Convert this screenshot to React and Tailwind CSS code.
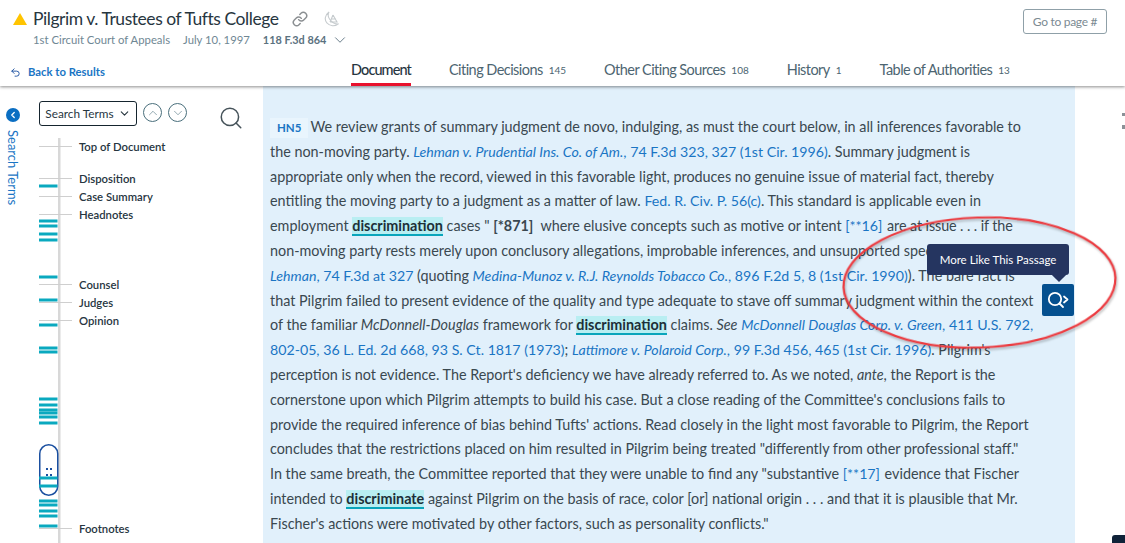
import React from 'react';
import { ChevronDown, ChevronUp, ChevronLeft, Search, Link as ChainIcon, Undo2 } from 'lucide-react';

const tabs = [
  { label: 'Document', active: true },
  { label: 'Citing Decisions', count: '145' },
  { label: 'Other Citing Sources', count: '108' },
  { label: 'History', count: '1' },
  { label: 'Table of Authorities', count: '13' },
];

const hits = [186, 221, 226, 234, 240, 277, 300, 325, 348, 352, 399, 405, 410, 413, 417, 423, 478, 486, 501, 505, 511, 516, 526];
const ticks = [146, 178, 196, 214, 284, 302, 320, 528];

const Link = ({ children, italic }) => (
  <span className={`text-[14.18px] text-[#1a75c4] ${italic ? 'italic' : ''}`}>{children}</span>
);

const Term = ({ children }) => (
  <span className="bg-[#b9eef2] border-b-2 border-[#0aa5bb] font-bold text-[#1d2f38]">{children}</span>
);

const Line = ({ children }) => <div className="h-[24.8px] whitespace-nowrap">{children}</div>;

function Header() {
  return (
    <header className="h-[86px] bg-white shadow-[0_1px_3px_rgba(0,0,0,0.45)] relative z-10 flex flex-col shrink-0">
      <div className="flex justify-between pt-[8px] pr-[18px]">
        <div className="pl-[13px]">
          <div className="flex items-center h-[22px]">
            <svg width="14" height="12" viewBox="0 0 14 12"><path d="M7 0 L14 12 L0 12 Z" fill="#ffc400" /></svg>
            <h1 className="ml-[6px] text-[17.5px] font-normal text-[#27363f] tracking-[-0.45px]">Pilgrim v. Trustees of Tufts College</h1>
            <ChainIcon className="ml-[14px] text-[#8b8f92]" size={16} strokeWidth={2.2} />
            <svg className="ml-[16px]" width="15" height="16" viewBox="0 0 15 16" fill="none" stroke="#c6cbce" strokeWidth="1.1">
              <path d="M5 1 C1 4 0 9 3 12 C6 15.5 11 15.5 14 13 C10 13 7.5 11 5.5 8 C4 6 4 3 5 1 Z" />
              <path d="M9 4 L6 11 M9 4 L13 11 L6 11 M7.5 8 L12 8" />
            </svg>
          </div>
          <div className="flex items-center pl-[20px] mt-[1px] text-[11.3px] leading-[18px] text-[#6f8794]">
            <span>1st Circuit Court of Appeals</span>
            <span className="ml-[13px]">July 10, 1997</span>
            <span className="ml-[13px] text-[10.9px] font-bold text-[#5b7280]">118 F.3d 864</span>
            <ChevronDown className="ml-[5px] text-[#5b7280]" size={18} strokeWidth={1.2} />
          </div>
        </div>
        <button className="mt-[1px] w-[84px] h-[25px] border border-[#8fa0a8] rounded-[3px] text-[12px] text-[#7b8a92] tracking-[-0.3px]">Go to page #</button>
      </div>
      <div className="flex items-center mt-[8px] h-[29px]">
        <a className="w-[351px] flex items-center pl-[10px] pt-[2px] text-[11.3px] font-bold text-[#1a75c4]">
          <Undo2 size={11} strokeWidth={2} className="text-[#1a4fa0]" />
          <span className="ml-[7px]">Back to Results</span>
        </a>
        <nav className="flex gap-[38px] h-full">
          {tabs.map((t) => (
            <div key={t.label} className={`flex items-center h-[29px] border-b-[3px] text-[14.5px] ${t.active ? 'tracking-[-0.9px] border-[#e8112d] font-medium text-[#27363f]' : 'tracking-[-0.55px] border-transparent text-[#4d6571]'}`}>
              {t.label}
              {t.count && <span className="ml-[6px] text-[10px] tracking-normal">{t.count}</span>}
            </div>
          ))}
        </nav>
      </div>
    </header>
  );
}

function Rail() {
  return (
    <aside className="w-[263px] shrink-0 flex overflow-hidden">
      <div className="w-[39px] shrink-0 pl-[6px] pt-[22px]">
        <div className="w-[14px] h-[14px] rounded-full bg-[#0a6ec2] flex items-center justify-center">
          <ChevronLeft size={10} strokeWidth={3} className="text-white" />
        </div>
        <div className="[writing-mode:vertical-rl] text-[13px] leading-[14px] mt-[8px] text-[#1a75c4]">Search Terms</div>
      </div>
      <div className="relative flex-1">
        <div className="flex items-start pt-[15px]">
          <div className="w-[98px] h-[25px] border-[1.5px] border-[#15242e] rounded-[3px] flex items-center justify-center text-[11.8px] text-[#27363f]">
            Search Terms
            <ChevronDown size={13} strokeWidth={2} className="ml-[4px]" />
          </div>
          <div className="ml-[6px] mt-[2px] w-[19px] h-[19px] rounded-full border-[1.5px] border-[#4a6f7c] flex items-center justify-center">
            <ChevronUp size={14} strokeWidth={1} className="text-[#4a6f7c]" />
          </div>
          <div className="ml-[6px] mt-[2px] w-[19px] h-[19px] rounded-full border-[1.5px] border-[#4a6f7c] flex items-center justify-center">
            <ChevronDown size={14} strokeWidth={1} className="text-[#4a6f7c]" />
          </div>
          <Search size={26} strokeWidth={1.4} className="ml-[31px] mt-[4px] text-[#46535a]" />
        </div>
        {/* section labels, spaced like the document outline */}
        <div className="pl-[40px] mt-[7px] text-[11.3px] font-semibold leading-[18px] text-[#27363f]">
          <div>Top of Document</div>
          <div className="mt-[14px]">Disposition</div>
          <div>Case Summary</div>
          <div>Headnotes</div>
          <div className="mt-[52px]">Counsel</div>
          <div>Judges</div>
          <div>Opinion</div>
          <div className="mt-[190px]">Footnotes</div>
        </div>
        {/* minimap of hits in the document */}
        <svg className="absolute left-0 top-0" width="40" height="457" viewBox="0 86 40 457">
          <rect x="19" y="138" width="2.5" height="405" fill="#d8d8d8" />
          {ticks.map((y) => <rect key={y} x="0" y={y} width="33" height="1" fill="#cfcfcf" />)}
          <rect x="0.75" y="444.75" width="18" height="50.5" rx="9" fill="#fff" stroke="#1a4fa0" strokeWidth="1.5" />
          {[[7, 468], [11, 468], [7, 474], [11, 474]].map(([x, y]) => <rect key={`${x}-${y}`} x={x} y={y} width="2" height="2" fill="#1a4fa0" />)}
          {hits.map((y) => <rect key={y} x="0" y={y - 1.5} width="18.5" height="3" fill="#0aa9bf" />)}
        </svg>
      </div>
    </aside>
  );
}

function Passage() {
  return (
    <main className="w-[812px] shrink-0 bg-[#e1f0fb] pl-[7px] pt-[29px] text-[14.37px] leading-[24.8px] text-[#3a4850] overflow-hidden">
      <Line>
        <span className="inline-block h-[20px] leading-[20px] px-[7px] mr-[2px] bg-[#e9f5fd] text-[11.5px] font-bold text-[#1a75c4]">HN5</span>
        We review grants of summary judgment de novo, indulging, as must the court below, in all inferences favorable to
      </Line>
      <Line>the non-moving party. <Link italic>Lehman v. Prudential Ins. Co. of Am.</Link><Link>, 74 F.3d 323, 327 (1st Cir. 1996)</Link>. Summary judgment is</Line>
      <Line>appropriate only when the record, viewed in this favorable light, produces no genuine issue of material fact, thereby</Line>
      <Line>entitling the moving party to a judgment as a matter of law. <Link>Fed. R. Civ. P. 56(c)</Link>. This standard is applicable even in</Line>
      <Line>employment <Term>discrimination</Term> cases " <span className="font-bold">[*871]</span>&nbsp; where elusive concepts such as motive or intent <Link>[**16]</Link> <span className="ml-[1px] tracking-[-0.1px]">are at issue . . . if the</span></Line>
      <Line>non-moving party rests merely upon conclusory allegations, improbable inferences, and unsupported speculation.</Line>
      <Line><Link italic>Lehman</Link><Link>, 74 F.3d at 327</Link> (quoting <Link italic>Medina-Munoz v. R.J. Reynolds Tobacco Co.</Link><Link>, 896 F.2d 5, 8 (1st Cir. 1990)</Link>). The bare fact is</Line>
      <Line>that Pilgrim failed to present evidence of the quality and type adequate to stave off summary judgment within the context</Line>
      <Line>of the familiar <i>McDonnell-Douglas</i> framework for <Term>discrimination</Term> claims. <i>See</i> <Link italic>McDonnell Douglas Corp. v. Green</Link><Link>, 411 U.S. 792,</Link></Line>
      <Line><Link>802-05, 36 L. Ed. 2d 668, 93 S. Ct. 1817 (1973)</Link>; <Link italic>Lattimore v. Polaroid Corp.</Link><Link>, 99 F.3d 456, 465 (1st Cir. 1996)</Link>. Pilgrim's</Line>
      <Line>perception is not evidence. The Report's deficiency we have already referred to. As we noted, <i>ante</i>, the Report is the</Line>
      <Line>cornerstone upon which Pilgrim attempts to build his case. But a close reading of the Committee's conclusions fails to</Line>
      <Line>provide the required inference of bias behind Tufts' actions. Read closely in the light most favorable to Pilgrim, the Report</Line>
      <Line>concludes that the restrictions placed on him resulted in Pilgrim being treated "differently from other professional staff."</Line>
      <Line>In the same breath, the Committee reported that they were unable to find any "substantive <Link>[**17]</Link> <span className="ml-[1px]">evidence that Fischer</span></Line>
      <Line>intended to <Term>discriminate</Term> against Pilgrim on the basis of race, color [or] national origin . . . and that it is plausible that Mr.</Line>
      <Line>Fischer's actions were motivated by other factors, such as personality conflicts."</Line>
    </main>
  );
}

export default function App() {
  return (
    <div className="relative w-[1125px] h-[543px] bg-white overflow-hidden flex flex-col font-['Lato','Open_Sans',sans-serif]">
      <Header />
      <div className="flex flex-1 min-h-0">
        <Rail />
        <Passage />
        <div className="flex-1 flex flex-col items-end pt-[27px] gap-[9px]">
          <div className="w-[3px] h-[3px] bg-[#8a9197]" />
          <div className="w-[3px] h-[4px] bg-[#8a9197]" />
        </div>
      </div>

      {/* tooltip + action button over the text */}
      <div className="absolute left-[927px] top-[244px] w-[142px] h-[31px] bg-[#253560] rounded-[3px] flex items-center justify-center text-[11.5px] text-white">
        More Like This Passage
        <div className="absolute left-[127px] top-[26px] w-[10px] h-[10px] bg-[#253560] rotate-45" />
      </div>
      <div className="absolute left-[1042px] top-[284px] w-[32px] h-[32px] rounded-[2px] bg-[#05508f] flex items-center justify-center">
        <svg width="22" height="18" viewBox="0 0 22 18" fill="none" stroke="#fff" strokeWidth="1.8" strokeLinecap="round" strokeLinejoin="round">
          <circle cx="8" cy="8" r="6.2" />
          <path d="M12.5 12.5 L16 16" />
          <path d="M17 5.5 L20.5 8.5 L17 11.5" />
        </svg>
      </div>

      {/* red annotation ring */}
      <svg className="absolute left-[830px] top-[205px] pointer-events-none" width="295" height="155" viewBox="0 0 295 155" fill="none">
        <ellipse cx="149.5" cy="77.5" rx="136" ry="65" transform="rotate(-2 150 78)" stroke="#ec3a3f" strokeWidth="2.2" style={{ filter: 'drop-shadow(1px 2px 1px rgba(0,0,0,0.25))' }} />
      </svg>

      <div className="absolute right-0 bottom-0 w-[13px] h-[8px] bg-[#0f2238] rounded-tl-[3px]" />
    </div>
  );
}
